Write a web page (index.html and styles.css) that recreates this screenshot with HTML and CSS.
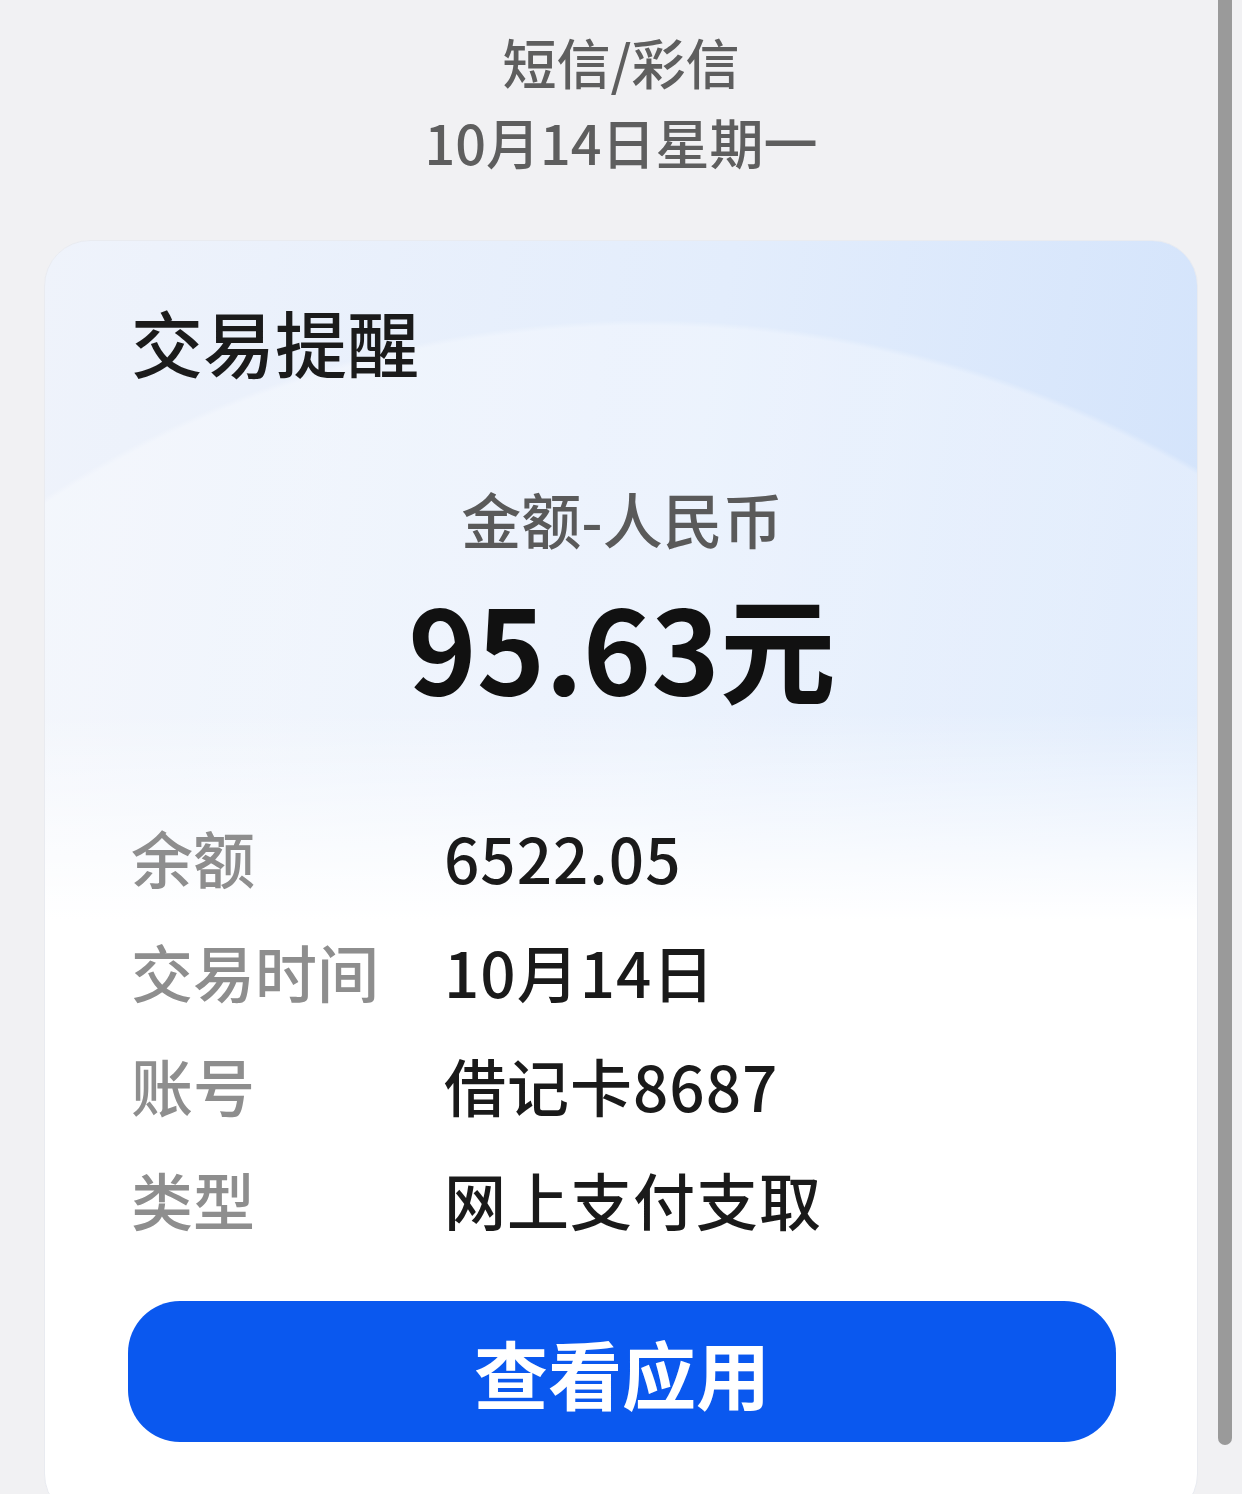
FILE: index.html
```html
<!DOCTYPE html>
<html lang="zh-CN">
<head>
    <meta charset="UTF-8">
    <meta name="viewport" content="width=device-width, initial-scale=1.0">
    <title>短信/彩信</title>
    <link rel="stylesheet" href="styles.css">
</head>
<body>
    <div class="header">
        <div class="sender">短信/彩信</div>
        <div class="date">10月14日星期一</div>
    </div>

    <div class="card">
        <h1 class="card-title">交易提醒</h1>
        <div class="amount-label">金额-人民币</div>
        <div class="amount">95.63元</div>

        <div class="details">
            <div class="row"><span class="label">余额</span><span class="value">6522.05</span></div>
            <div class="row"><span class="label">交易时间</span><span class="value">10月14日</span></div>
            <div class="row"><span class="label">账号</span><span class="value">借记卡8687</span></div>
            <div class="row"><span class="label">类型</span><span class="value">网上支付支取</span></div>
        </div>

        <button class="open-btn">查看应用</button>
    </div>

    <!-- scrollbar thumb on top of the page -->
    <div class="scroll-thumb"></div>
</body>
</html>
```

FILE: styles.css
```css
html, body {
    margin: 0;
    padding: 0;
    height: 1494px;
    overflow: hidden;
}
body {
    font-family: "Noto Sans CJK SC", "Noto Sans", sans-serif;
    background-color: #f1f1f3;
}
.header {
    padding-top: 22px;
    text-align: center;
    color: #5e5e5e;
    font-size: 54px;
    font-weight: 500;
    line-height: 80px;
}
.card {
    margin: 58px 44px 0 44px;
    height: 1280px;
    box-sizing: border-box;
    padding: 0 84px 0 86px;
    border-radius: 46px;
    border: 1px solid #e9ebf0;
    background-color: #fff;
    background-image:
        linear-gradient(180deg, rgba(255,255,255,0) 0px, rgba(255,255,255,0) 470px, #fff 680px),
        radial-gradient(circle at 600px 1185px, rgba(255,255,255,0.32) 0px, rgba(255,255,255,0.32) 1100px, rgba(255,255,255,0) 1106px),
        linear-gradient(100deg, #eff3fb 0%, #e3edfc 50%, #cfe1fb 100%);
}
.card-title {
    margin: 0;
    padding-top: 50px;
    font-size: 72px;
    line-height: 100px;
    font-weight: 500;
    color: #1b1b1b;
}
.amount-label {
    margin-top: 87px;
    text-align: center;
    font-size: 60px;
    line-height: 80px;
    font-weight: 500;
    color: #5a5a5a;
}
.amount {
    margin-top: 24px;
    text-align: center;
    font-size: 116px;
    line-height: 124px;
    font-weight: 700;
    color: #111;
}
.details {
    margin-top: 94px;
}
.row {
    display: flex;
    font-size: 62px;
    line-height: 114px;
    font-weight: 500;
}
.label {
    width: 313px;
    color: #8e8e8e;
}
.value {
    color: #1a1a1a;
    letter-spacing: 1px;
}
.open-btn {
    display: block;
    width: 988px;
    height: 141px;
    margin: 45px 0 0 -3px;
    border: none;
    border-radius: 52px;
    background-color: #0a58ef;
    color: #fff;
    font-family: inherit;
    font-size: 74px;
    font-weight: 700;
    cursor: pointer;
}
.scroll-thumb {
    position: fixed;
    top: 0;
    right: 10px;
    width: 14px;
    height: 1445px;
    border-radius: 0 0 7px 7px;
    background-color: #9a9a9a;
}
```
